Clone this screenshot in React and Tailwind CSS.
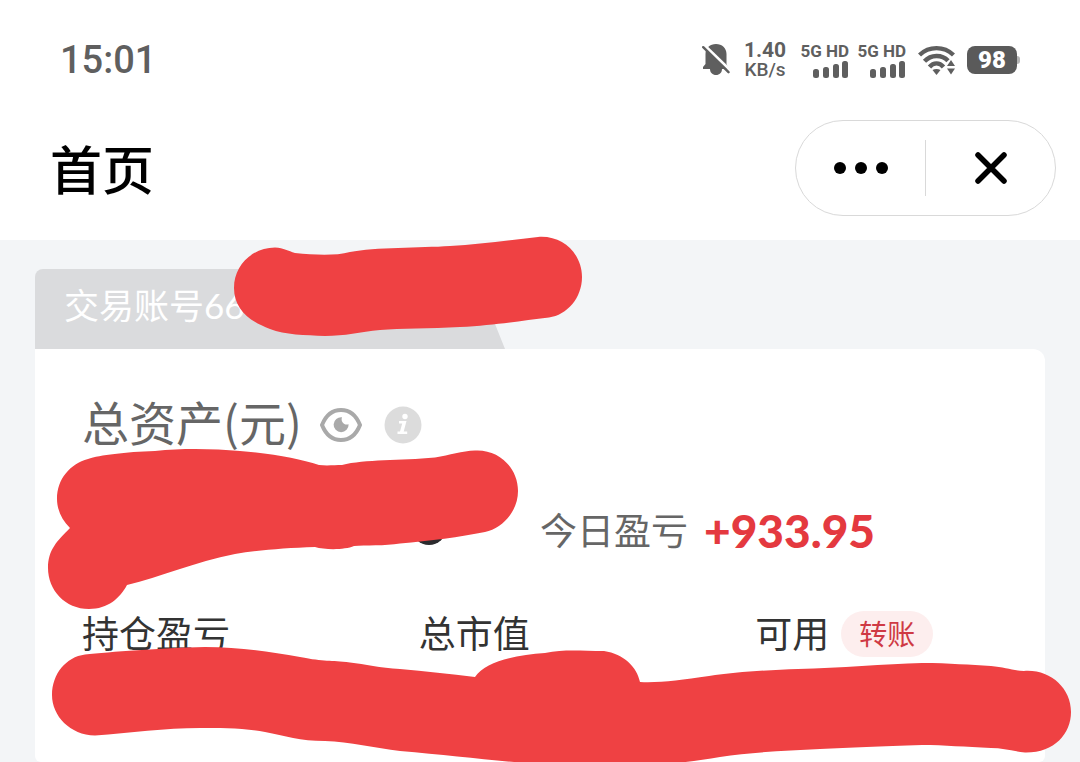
const MARKER = '#ef4143'

function MutedBellIcon() {
  return (
    <svg width="28" height="32" viewBox="0 0 28 32" aria-hidden="true">
      <path
        d="M14 0C20 0 24.500 4 24.500 10v10l2 5H1v-2l2.500-3V10C3.500 4 8 0 14 0z"
        fill="#5f5f5f"
      />
      <path d="M8 25h12c0 3.500-2.500 6-6 6S8 28.500 8 25z" fill="#5f5f5f" />
      <path d="M1 0L28 26" stroke="#fff" strokeWidth="3" />
      <path d="M1.200 3.200L26.500 28.200" stroke="#5f5f5f" strokeWidth="2.400" strokeLinecap="round" />
    </svg>
  )
}

function SignalBars() {
  return (
    <svg width="36" height="17" viewBox="0 0 36 17" fill="#5f5f5f" aria-hidden="true">
      <rect x="0" y="8" width="6" height="9" rx="2.500" />
      <rect x="10" y="6" width="6" height="11" rx="2.500" />
      <rect x="20" y="3" width="6" height="14" rx="2.500" />
      <rect x="29" y="0" width="6" height="17" rx="2.500" />
    </svg>
  )
}

function WifiIcon() {
  return (
    <svg width="37" height="30" viewBox="0 0 37 30" fill="none" aria-hidden="true">
      <g stroke="#5f5f5f" strokeWidth="4.400">
        <path d="M1.500 10C11 .800 26 .800 35.500 10" />
        <path d="M6.500 16.300C13 9.300 24 9.300 30 15.800" />
        <path d="M11.500 22C15.500 17.200 21.500 17.200 25.500 22" />
      </g>
      <path d="M14.500 25c2.500-1.500 5.500-1.500 8 0l-4 5z" fill="#5f5f5f" />
      <path d="M29 21l4-6 4 6zM29 23.500h8l-4 6z" fill="#5f5f5f" />
    </svg>
  )
}

function EyeIcon() {
  return (
    <svg width="42" height="36" viewBox="0 0 42 36" fill="none" aria-hidden="true">
      <path
        d="M2 18C6 8 13 3 21 3s15 5 19 15c-4 10-11 15-19 15S6 28 2 18z"
        stroke="#a9a9a9"
        strokeWidth="4"
        strokeLinejoin="round"
      />
      <path d="M22 10.200a7.500 7.500 0 1 0 6.600 7c-4.100 1.500-8.300-2.500-6.600-7z" fill="#a9a9a9" />
    </svg>
  )
}

function InfoIcon() {
  return (
    <svg width="38" height="38" viewBox="0 0 38 38" aria-hidden="true">
      <circle cx="19" cy="19" r="18.500" fill="#dcdcdc" />
      <circle cx="21" cy="10.500" r="2.700" fill="#fff" />
      <path d="M15 15h7.500l-2.800 10.500h3.500V28h-9.700v-2.500h2.500l2.200-8H15z" fill="#fff" />
    </svg>
  )
}

function StatusBar() {
  return (
    <div className="flex h-[120px] items-center justify-between pr-[60px] pl-[60px] font-['Roboto',sans-serif] text-[#5f5f5f]">
      <time className="text-[38px] leading-10 font-medium">15:01</time>
      <div className="flex items-center">
        <MutedBellIcon />
        <div className="ml-3 w-[46px] text-center">
          <div className="text-[21px] leading-5 font-bold">1.40</div>
          <div className="text-[19px] leading-5 font-medium">KB/s</div>
        </div>
        <div className="ml-3 flex gap-2">
          {['sim1', 'sim2'].map(sim => (
            <div key={sim} className="flex w-[49px] flex-col items-end gap-0.5">
              <div className="text-[17px] leading-4 font-bold whitespace-nowrap">5G HD</div>
              <SignalBars />
            </div>
          ))}
        </div>
        <div className="ml-3">
          <WifiIcon />
        </div>
        <div className="ml-3 flex items-center">
          <div className="flex h-7 w-[50px] items-center justify-center rounded-lg bg-[#5a5a5a] text-2xl leading-7 font-black text-white">
            98
          </div>
          <div className="h-2 w-[3px] rounded-r-sm bg-[#b5b5b5]" />
        </div>
      </div>
    </div>
  )
}

function NavBar() {
  return (
    <div className="flex items-start justify-between pr-6 pb-6 pl-[50px]">
      <h1 className="pt-3 text-[52px] leading-[76px] font-medium text-black">首页</h1>
      <div className="flex h-24 w-[261px] items-center rounded-full border border-[#d9d9d9]">
        <button type="button" aria-label="更多" className="flex flex-1 items-center justify-center gap-[9px]">
          <span className="size-3 rounded-full bg-black" />
          <span className="size-3 rounded-full bg-black" />
          <span className="size-3 rounded-full bg-black" />
        </button>
        <div className="h-14 w-px bg-[#d9d9d9]" />
        <button type="button" aria-label="关闭" className="flex flex-1 items-center justify-center">
          <svg width="32" height="32" viewBox="0 0 32 32" aria-hidden="true">
            <path d="M3 3l26 26M29 3L3 29" stroke="#000" strokeWidth="5.500" strokeLinecap="round" />
          </svg>
        </button>
      </div>
    </div>
  )
}

// Marker strokes that hide the private numbers
function AccountMarker() {
  return (
    <svg
      className="pointer-events-none absolute top-[-39px] left-[195px] z-10"
      width="360"
      height="110"
      viewBox="230 230 360 110"
      aria-hidden="true"
    >
      <path
        d="M234 288C234 265 252 248 275 247.500C284 248 288 251 295 253C315 255 335 256 350 252C375 247 420 248 450 246C480 244 510 240 538 237C563 235 582 254 582 277C582 298 567 315 549 317.500C520 321 495 325 460 327C430 329 400 328 380 330C360 332 345 336 325 336C305 335 285 335 270 329C248 321 234 308 234 288Z"
        fill={MARKER}
      />
    </svg>
  )
}

function TotalMarker() {
  return (
    <svg
      className="pointer-events-none absolute top-[91px] left-[5px] z-10"
      width="490"
      height="180"
      viewBox="40 440 490 180"
      aria-hidden="true"
    >
      {/* bottom of the last digit, still showing below the stroke */}
      <ellipse cx="429" cy="529" rx="17" ry="16" fill="#2b2b2e" />
      <path
        d="M57 499C57 479 70 464 88 459C100 455 125 452 155 451C185 448 215 449 240 451C275 454 300 459 319 465C327 466 335 465 342 465C365 459 400 461 435 457.500C450 455 462 451 475 450.500C498 449 518 467 518 491C518 511 503 528 485 532C460 537 430 541 400 543.500C385 546 365 545 354 546C345 550 325 550 315 547C285 548 260 550 235 554C195 562 160 577 127 585C120 598 108 609 89 609C65 609 48 590 48 568C48 550 57 541 70 528C62 520 57 510 57 499Z"
        fill={MARKER}
      />
    </svg>
  )
}

function HoldingsMarker() {
  return (
    <svg
      className="pointer-events-none absolute top-[291px] left-[5px] z-10"
      width="1040"
      height="140"
      viewBox="40 640 1040 140"
      aria-hidden="true"
    >
      <path
        d="M52 695C52 674 66 657 85 654.500C110 652 160 648 205 647C240 647 270 652 300 657C325 662 330 660 350 662.500C365 664 380 668 400 669C425 671 450 674 475 677C485 662 515 655 545 653C565 649 580 651 604 651C624 654 637 667 640 682C660 683 680 680 709 676C735 672 770 670 798 669C840 668 885 664 922 663C950 663 970 665 991 666C1005 667 1014 671 1024 671C1050 669 1071 688 1071 712C1071 734 1054 753 1025 752.500C1012 751 1003 748 991 748C965 747 945 745 922 745C880 746 850 748 820 749C785 751 750 752 720 757C690 762 665 765 635 765L560 765C510 763 460 756 400 751C375 748 350 742 325 741C300 741 285 736 265 732C245 728 220 728 200 728C165 728 130 733 95 735.500C70 735 52 716 52 695Z"
        fill={MARKER}
      />
    </svg>
  )
}

function AccountCard() {
  return (
    <section className="px-[35px] pt-[29px]">
      <div className="relative">
        <div className="flex h-20 w-[470px] items-center rounded-tl-lg bg-[#dadbdd] pb-2 pl-[29px] text-[35px] text-white [clip-path:polygon(0_0,438px_0,100%_100%,0_100%)]">
          交易账号66
        </div>
        <AccountMarker />
      </div>

      <div className="relative rounded-tr-xl rounded-b-md bg-white pt-11 pb-24">
        <div className="flex h-16 items-center pl-[47px]">
          <h2 className="pb-2 font-['Noto_Sans_CJK_SC',sans-serif] text-[47px] leading-[64px] text-[#666]">
            总资产(元)
          </h2>
          <button type="button" aria-label="隐藏金额" className="ml-[18px]">
            <EyeIcon />
          </button>
          <button type="button" aria-label="资产说明" className="ml-[22px]">
            <InfoIcon />
          </button>
        </div>

        <div className="mt-[42px] grid h-16 grid-cols-2 items-center">
          <div className="col-start-2 flex items-center gap-4">
            <span className="text-[37px] leading-[56px] text-[#666]">今日盈亏</span>
            <span className="text-[46px] leading-[56px] font-black text-[#e4393f]">+933.95</span>
          </div>
        </div>

        <div className="mt-[39px] grid h-16 grid-cols-3 items-center text-[37px] leading-[56px] text-[#333]">
          <div className="pl-[47px]">持仓盈亏</div>
          <div className="pl-[47px]">总市值</div>
          <div className="flex items-center gap-3 pl-[47px]">
            <span>可用</span>
            <button
              type="button"
              className="h-[46px] w-[92px] rounded-full bg-[#fdeeee] text-[28px] leading-[46px] text-[#cf3a44]"
            >
              转账
            </button>
          </div>
        </div>

        <TotalMarker />
        <HoldingsMarker />
      </div>
    </section>
  )
}

export default function App() {
  return (
    <div className="min-h-screen overflow-hidden bg-[#f3f5f7] font-['Lato','Noto_Sans_CJK_SC',sans-serif]">
      <header className="bg-white">
        <StatusBar />
        <NavBar />
      </header>
      <main>
        <AccountCard />
      </main>
    </div>
  )
}
